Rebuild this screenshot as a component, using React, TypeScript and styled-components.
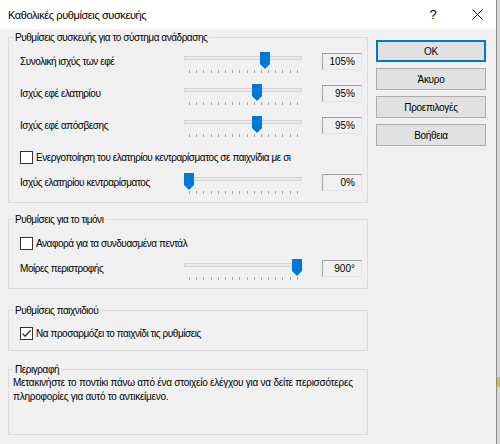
import React from "react";
import styled, { createGlobalStyle } from "styled-components";

const Global = createGlobalStyle`
  html, body { margin: 0; padding: 0; background: #d8d8d8; }
  body { font-family: "Liberation Sans", Arial, sans-serif; font-size: 10px; letter-spacing: -0.45px; color: #000; }
  * { box-sizing: border-box; }
`;

const Desktop = styled.div`
  width: 500px;
  height: 444px;
  position: relative;
  overflow: hidden;
  background: #d9d9d9;
`;

const DesktopIcon = styled.div`
  position: absolute;
  left: 497px;
  top: 377px;
  width: 6px;
  height: 10px;
  background: #d9b84a;
  border-radius: 2px;
`;

const Window = styled.div`
  width: 497px;
  height: 444px;
  background: #f0f0f0;
  border-right: 1px solid #8a8a8a;
  display: flex;
  flex-direction: column;
`;

const TitleBar = styled.div`
  height: 29px;
  flex: none;
  background: #fff;
  display: flex;
  align-items: center;
  padding-left: 8px;
  font-size: 11px;
  letter-spacing: -0.4px;
`;

const Title = styled.div`
  flex: 1;
`;

const CaptionButton = styled.div<{ $w: number; $pl?: number }>`
  width: ${(p) => p.$w}px;
  height: 29px;
  padding-left: ${(p) => p.$pl ?? 0}px;
  display: flex;
  align-items: center;
  justify-content: center;
  font-size: 13px;
  letter-spacing: 0;
`;

const Body = styled.div`
  display: grid;
  grid-template-columns: 360px 110px;
  column-gap: 8px;
  padding: 2px 0 0 8px;
`;

const LeftColumn = styled.div`
  display: flex;
  flex-direction: column;
`;

const Group = styled.fieldset<{ $mt: number; $pt: number; $pb: number; $pl: number }>`
  margin: ${(p) => p.$mt}px 0 0 0;
  padding: ${(p) => p.$pt}px 5px ${(p) => p.$pb}px ${(p) => p.$pl}px;
  border: 1px solid #dcdcdc;
  min-width: 0;
`;

const Legend = styled.legend<{ $ml: number }>`
  padding: 0 2px;
  margin-left: ${(p) => p.$ml}px;
  line-height: 13px;
  height: 13px;
`;

const SliderRow = styled.div<{ $mt?: number }>`
  display: grid;
  grid-template-columns: 164px 118px 60px;
  align-items: center;
  height: 32px;
  margin-top: ${(p) => p.$mt ?? 0}px;
`;

const RowLabel = styled.div`
  white-space: nowrap;
`;

const Slider = styled.div`
  position: relative;
  width: 118px;
  height: 24px;
  align-self: start;
  margin-top: 7px;
`;

const Track = styled.div`
  margin-top: 4px;
  height: 4px;
  background: #e7eaea;
  border: 1px solid #d6d6d6;
`;

const Ticks = styled.div`
  display: flex;
  justify-content: space-between;
  margin-top: 10px;
  padding: 0 4px 0 5px;
`;

const Tick = styled.span`
  width: 1px;
  height: 3px;
  background: #a8a8a8;
`;

const Thumb = styled.svg`
  position: absolute;
  top: 0;
  width: 10px;
  height: 17px;
`;

const ValueBox = styled.div`
  justify-self: end;
  width: 40px;
  height: 17px;
  border: 1px solid;
  border-color: #a0a0a0 #e3e3e3 #e3e3e3 #a0a0a0;
  text-align: right;
  padding-right: 6px;
  line-height: 15px;
  letter-spacing: 0;
`;

const CheckRow = styled.label<{ $mt: number }>`
  display: flex;
  align-items: center;
  gap: 3px;
  height: 18px;
  margin-top: ${(p) => p.$mt}px;
  white-space: nowrap;
  overflow: hidden;
`;

const Box = styled.span`
  flex: none;
  width: 13px;
  height: 13px;
  background: #fff;
  border: 1px solid #333;
  display: flex;
  align-items: center;
  justify-content: center;
`;

const Description = styled.p`
  margin: 0;
  line-height: 14px;
  letter-spacing: -0.25px;
`;

const ButtonColumn = styled.div`
  display: flex;
  flex-direction: column;
  gap: 6px;
  margin-top: 9px;
`;

const Button = styled.button<{ $default?: boolean }>`
  height: 22px;
  font-family: inherit;
  font-size: 10px;
  letter-spacing: -0.3px;
  color: #000;
  background: #e1e1e1;
  border: ${(p) => (p.$default ? "2px solid #0078d7" : "1px solid #adadad")};
  padding: 0;
`;

const TICKS = Array.from({ length: 16 });

function TrackBar({ frac }: { frac: number }) {
  return (
    <Slider>
      <Track />
      <Ticks>
        {TICKS.map((_, i) => (
          <Tick key={i} />
        ))}
      </Ticks>
      <Thumb viewBox="0 0 10 17" style={{ left: Math.round(frac * 108) }}>
        <path d="M0 0 H10 V12 L5 17 L0 12 Z" fill="#0078d7" />
      </Thumb>
    </Slider>
  );
}

function Row({ label, frac, value, mt }: { label: string; frac: number; value: string; mt?: number }) {
  return (
    <SliderRow $mt={mt}>
      <RowLabel>{label}</RowLabel>
      <TrackBar frac={frac} />
      <ValueBox>{value}</ValueBox>
    </SliderRow>
  );
}

function Check({ text, checked, mt }: { text: string; checked?: boolean; mt: number }) {
  return (
    <CheckRow $mt={mt}>
      <Box>
        {checked && (
          <svg width="11" height="11" viewBox="0 0 11 11">
            <path d="M1.5 5.5 L4.2 8.3 L9.6 2.3" fill="none" stroke="#333" strokeWidth="1.3" />
          </svg>
        )}
      </Box>
      <span>{text}</span>
    </CheckRow>
  );
}

export default function App() {
  return (
    <Desktop>
      <Global />
      <Window>
        <TitleBar>
          <Title>Καθολικές ρυθμίσεις συσκευής</Title>
          <CaptionButton $w={44}>?</CaptionButton>
          <CaptionButton $w={41} $pl={4}>
            <svg width="11" height="11" viewBox="0 0 11 11">
              <path d="M0.5 0.5 L10.5 10.5 M10.5 0.5 L0.5 10.5" stroke="#111" strokeWidth="1" />
            </svg>
          </CaptionButton>
        </TitleBar>
        <Body>
          <LeftColumn>
            <Group $mt={0} $pt={1} $pb={4} $pl={11}>
              <Legend $ml={-7}>Ρυθμίσεις συσκευής για το σύστημα ανάδρασης</Legend>
              <Row label="Συνολική ισχύς των εφέ" frac={105 / 150} value="105%" />
              <Row label="Ισχύς εφέ ελατηρίου" frac={95 / 150} value="95%" />
              <Row label="Ισχύς εφέ απόσβεσης" frac={95 / 150} value="95%" />
              <Check mt={7} text="Ενεργοποίηση του ελατηρίου κεντραρίσματος σε παιχνίδια με σι" />
              <Row label="Ισχύς ελατηρίου κεντραρίσματος" frac={0} value="0%" />
            </Group>
            <Group $mt={10} $pt={0} $pb={4} $pl={11}>
              <Legend $ml={-7}>Ρυθμίσεις για το τιμόνι</Legend>
              <Check mt={8} text="Αναφορά για τα συνδυασμένα πεντάλ" />
              <Row label="Μοίρες περιστροφής" frac={1} value="900°" mt={0} />
            </Group>
            <Group $mt={15} $pt={0} $pb={8} $pl={11}>
              <Legend $ml={-7}>Ρυθμίσεις παιχνιδιού</Legend>
              <Check mt={7} checked text="Να προσαρμόζει το παιχνίδι τις ρυθμίσεις" />
            </Group>
            <Group $mt={12} $pt={0} $pb={30} $pl={4}>
              <Legend $ml={0}>Περιγραφή</Legend>
              <Description>
                Μετακινήστε το ποντίκι πάνω από ένα στοιχείο ελέγχου για να δείτε περισσότερες
                <br />
                πληροφορίες για αυτό το αντικείμενο.
              </Description>
            </Group>
          </LeftColumn>
          <ButtonColumn>
            <Button $default>OK</Button>
            <Button>Άκυρο</Button>
            <Button>Προεπιλογές</Button>
            <Button>Βοήθεια</Button>
          </ButtonColumn>
        </Body>
      </Window>
      <DesktopIcon />
    </Desktop>
  );
}
